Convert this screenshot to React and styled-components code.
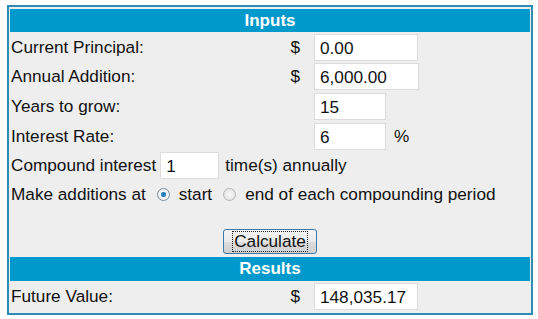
import React from 'react'
import styled, { createGlobalStyle } from 'styled-components'

const Global = createGlobalStyle`
  html, body {
    margin: 0;
    padding: 0;
    background: #ffffff;
  }
  body {
    font-family: "Liberation Sans", Arial, sans-serif;
    font-size: 17.2px;
    color: #111;
  }
`

const Panel = styled.div`
  margin: 5px 0 0 7px;
  width: 520px;
  border: 2px solid #2b8db5;
  padding: 2px 1px 2px 1px;
  background: #eeeeee;
  display: flex;
  flex-direction: column;
`

const Header = styled.div`
  background: #0099cc;
  color: #ffffff;
  font-weight: bold;
  font-size: 17px;
  text-align: center;
  height: ${p => p.h}px;
  line-height: ${p => p.h}px;
  margin-top: ${p => p.top || 0}px;
`

const Grid = styled.div`
  display: grid;
  grid-template-columns: 270px 33px 1fr;
  grid-template-rows: ${p => p.rows || '29px'};
  align-items: center;
  padding-left: 1px;
  margin-top: 1px;
`

const Label = styled.div`
  white-space: nowrap;
`

const Currency = styled.div`
  text-align: right;
  padding-right: 14px;
`

const Field = styled.div`
  display: flex;
  align-items: center;
  gap: 8px;
`

const Input = styled.div`
  box-sizing: border-box;
  width: ${p => p.w}px;
  height: 27px;
  background: #ffffff;
  border: 1px solid #dcdcdc;
  padding-left: 5px;
  line-height: 26px;
  display: inline-block;
`

const Line = styled.div`
  grid-column: 1 / -1;
  display: flex;
  align-items: center;
  white-space: nowrap;
`

const Gap = styled.span`
  display: inline-block;
  width: ${p => p.w}px;
`

const Radio = styled.span`
  display: inline-block;
  box-sizing: border-box;
  width: 13px;
  height: 13px;
  border-radius: 50%;
  border: 1px solid ${p => (p.checked ? '#7b8a99' : '#b4b4b4')};
  background: radial-gradient(circle, ${p => (p.checked ? '#1d6fa8 0, #3c93c8 2.5px, #f4f4f4 3px' : '#f7f7f7 0, #e8e8e8 5px')});
  margin: 0 9px 0 11px;
`

const ButtonRow = styled.div`
  display: flex;
  justify-content: center;
  margin-top: 20px;
  height: 25px;
`

const Button = styled.button`
  font-family: "Liberation Sans", Arial, sans-serif;
  font-size: 17.2px;
  color: #111;
  width: 94px;
  height: 25px;
  padding: 0;
  border: 1px solid #3d7bad;
  border-radius: 3px;
  background: linear-gradient(#f3f3f3 0%, #ebebeb 50%, #dddddd 51%, #cfcfcf 100%);
  display: flex;
  align-items: center;
  justify-content: center;
`

const Focus = styled.span`
  border: 1px dotted #222;
  padding: 0 1px;
  line-height: 19px;
`

const App = () => {
  return (
    <>
      <Global />
      <Panel>
        <Header h={23}>Inputs</Header>
        <Grid rows="29px 29px 30px 30px 29px 29px">
          <Label>Current Principal:</Label>
          <Currency>$</Currency>
          <Field><Input w={104}>0.00</Input></Field>

          <Label>Annual Addition:</Label>
          <Currency>$</Currency>
          <Field><Input w={105}>6,000.00</Input></Field>

          <Label>Years to grow:</Label>
          <Currency />
          <Field><Input w={72}>15</Input></Field>

          <Label>Interest Rate:</Label>
          <Currency />
          <Field><Input w={72}>6</Input>%</Field>

          <Line>
            Compound interest<Gap w={4} /><Input w={59}>1</Input><Gap w={6} />time(s) annually
          </Line>
          <Line>
            Make additions at<Radio checked />start<Radio />end of each compounding period
          </Line>
        </Grid>
        <ButtonRow>
          <Button><Focus>Calculate</Focus></Button>
        </ButtonRow>
        <Header h={24} top={3}>Results</Header>
        <Grid>
          <Label>Future Value:</Label>
          <Currency>$</Currency>
          <Field><Input w={104}>148,035.17</Input></Field>
        </Grid>
      </Panel>
    </>
  )
}

export default App
